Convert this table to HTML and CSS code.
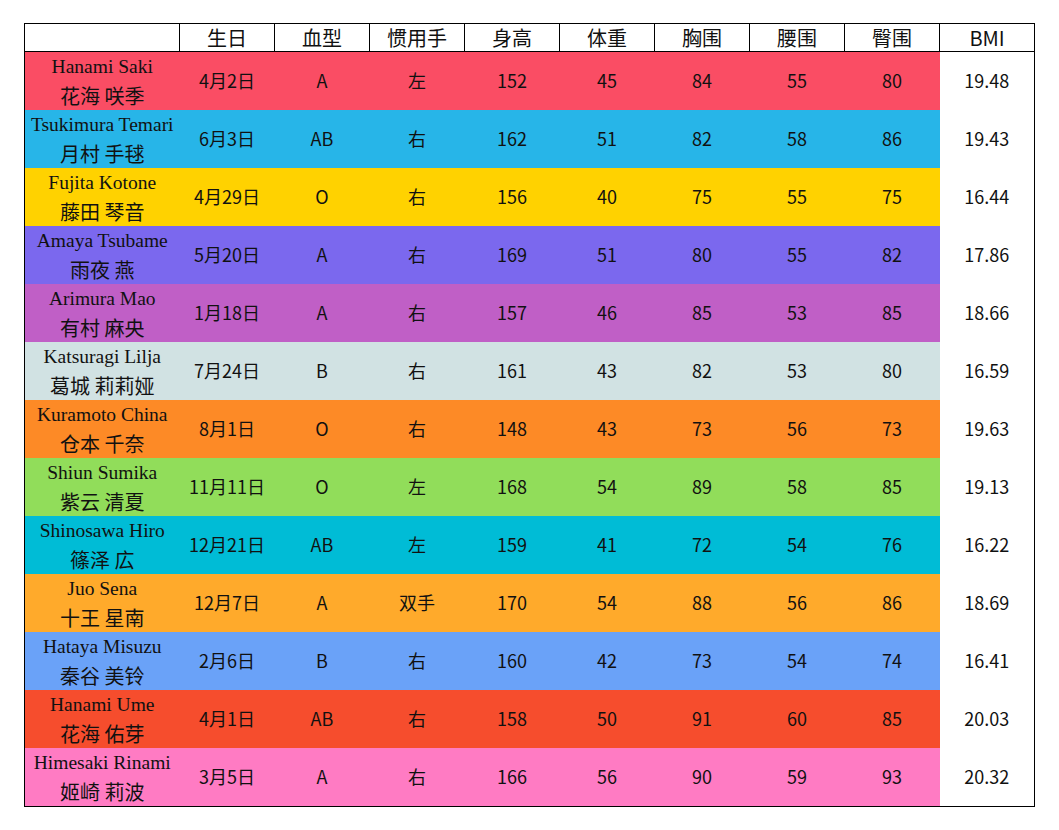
FILE: index.html
```html
<!DOCTYPE html>
<html lang="zh">
<head>
<meta charset="utf-8">
<title>Idol table</title>
<link rel="stylesheet" href="styles.css">
</head>
<body>
<table class="idols">
  <colgroup>
    <col class="c-name"><col><col><col><col><col><col><col><col><col>
  </colgroup>
  <thead>
    <tr><th></th><th>生日</th><th>血型</th><th>惯用手</th><th>身高</th><th>体重</th><th>胸围</th><th>腰围</th><th>臀围</th><th>BMI</th></tr>
  </thead>
  <tbody>
    <tr class="r1"><td class="name"><span class="en">Hanami Saki</span><span class="jp">花海 咲季</span></td><td>4月2日</td><td>A</td><td>左</td><td>152</td><td>45</td><td>84</td><td>55</td><td>80</td><td class="bmi">19.48</td></tr>
    <tr class="r2"><td class="name"><span class="en">Tsukimura Temari</span><span class="jp">月村 手毬</span></td><td>6月3日</td><td>AB</td><td>右</td><td>162</td><td>51</td><td>82</td><td>58</td><td>86</td><td class="bmi">19.43</td></tr>
    <tr class="r3"><td class="name"><span class="en">Fujita Kotone</span><span class="jp">藤田 琴音</span></td><td>4月29日</td><td>O</td><td>右</td><td>156</td><td>40</td><td>75</td><td>55</td><td>75</td><td class="bmi">16.44</td></tr>
    <tr class="r4"><td class="name"><span class="en">Amaya Tsubame</span><span class="jp">雨夜 燕</span></td><td>5月20日</td><td>A</td><td>右</td><td>169</td><td>51</td><td>80</td><td>55</td><td>82</td><td class="bmi">17.86</td></tr>
    <tr class="r5"><td class="name"><span class="en">Arimura Mao</span><span class="jp">有村 麻央</span></td><td>1月18日</td><td>A</td><td>右</td><td>157</td><td>46</td><td>85</td><td>53</td><td>85</td><td class="bmi">18.66</td></tr>
    <tr class="r6"><td class="name"><span class="en">Katsuragi Lilja</span><span class="jp">葛城 莉莉娅</span></td><td>7月24日</td><td>B</td><td>右</td><td>161</td><td>43</td><td>82</td><td>53</td><td>80</td><td class="bmi">16.59</td></tr>
    <tr class="r7"><td class="name"><span class="en">Kuramoto China</span><span class="jp">仓本 千奈</span></td><td>8月1日</td><td>O</td><td>右</td><td>148</td><td>43</td><td>73</td><td>56</td><td>73</td><td class="bmi">19.63</td></tr>
    <tr class="r8"><td class="name"><span class="en">Shiun Sumika</span><span class="jp">紫云 清夏</span></td><td>11月11日</td><td>O</td><td>左</td><td>168</td><td>54</td><td>89</td><td>58</td><td>85</td><td class="bmi">19.13</td></tr>
    <tr class="r9"><td class="name"><span class="en">Shinosawa Hiro</span><span class="jp">篠泽 広</span></td><td>12月21日</td><td>AB</td><td>左</td><td>159</td><td>41</td><td>72</td><td>54</td><td>76</td><td class="bmi">16.22</td></tr>
    <tr class="r10"><td class="name"><span class="en">Juo Sena</span><span class="jp">十王 星南</span></td><td>12月7日</td><td>A</td><td>双手</td><td>170</td><td>54</td><td>88</td><td>56</td><td>86</td><td class="bmi">18.69</td></tr>
    <tr class="r11"><td class="name"><span class="en">Hataya Misuzu</span><span class="jp">秦谷 美铃</span></td><td>2月6日</td><td>B</td><td>右</td><td>160</td><td>42</td><td>73</td><td>54</td><td>74</td><td class="bmi">16.41</td></tr>
    <tr class="r12"><td class="name"><span class="en">Hanami Ume</span><span class="jp">花海 佑芽</span></td><td>4月1日</td><td>AB</td><td>右</td><td>158</td><td>50</td><td>91</td><td>60</td><td>85</td><td class="bmi">20.03</td></tr>
    <tr class="r13"><td class="name"><span class="en">Himesaki Rinami</span><span class="jp">姬崎 莉波</span></td><td>3月5日</td><td>A</td><td>右</td><td>166</td><td>56</td><td>90</td><td>59</td><td>93</td><td class="bmi">20.32</td></tr>
  </tbody>
</table>
</body>
</html>
```
FILE: styles.css
```css
html, body {
  margin: 0;
  padding: 0;
  background: #ffffff;
}

body {
  padding: 23px 0 0 24px;
  font-family: "Noto Sans CJK SC", "Noto Sans", sans-serif;
  color: #111111;
}

.idols {
  border-collapse: collapse;
  table-layout: fixed;
  width: 1010px;
  border: 1px solid #000000;
}

.idols col {
  width: 95px;
}

.idols col.c-name {
  width: 155px;
}

.idols th {
  height: 27px;
  padding: 0;
  border: 1px solid #000000;
  font-weight: normal;
  font-size: 20px;
  line-height: 27px;
  text-align: center;
  color: #111111;
}

.idols td {
  height: 56px;
  padding: 0 0 2px;
  font-size: 18px;
  line-height: 24px;
  text-align: center;
  vertical-align: middle;
}

.idols td.name {
  padding: 0;
  line-height: 28px;
}

.en {
  display: block;
  font-family: "Liberation Serif", "Times New Roman", serif;
  font-size: 19.5px;
  line-height: 28px;
}

.jp {
  display: block;
  font-size: 20px;
  line-height: 28px;
  padding-top: 1px;
}

.idols td.bmi {
  background: #ffffff;
}

.r1 { background: #fa4d64; }
.r2 { background: #27b5e8; }
.r3 { background: #ffd200; }
.r4 { background: #7b68ee; }
.r5 { background: #c05fc6; }
.r6 { background: #d1e2e3; }
.r7 { background: #fd8a26; }
.r8 { background: #91dd5a; }
.r9 { background: #00bcd6; }
.r10 { background: #ffaa2b; }
.r11 { background: #6aa2f8; }
.r12 { background: #f64d2d; }
.r13 { background: #ff7bc3; }
```
